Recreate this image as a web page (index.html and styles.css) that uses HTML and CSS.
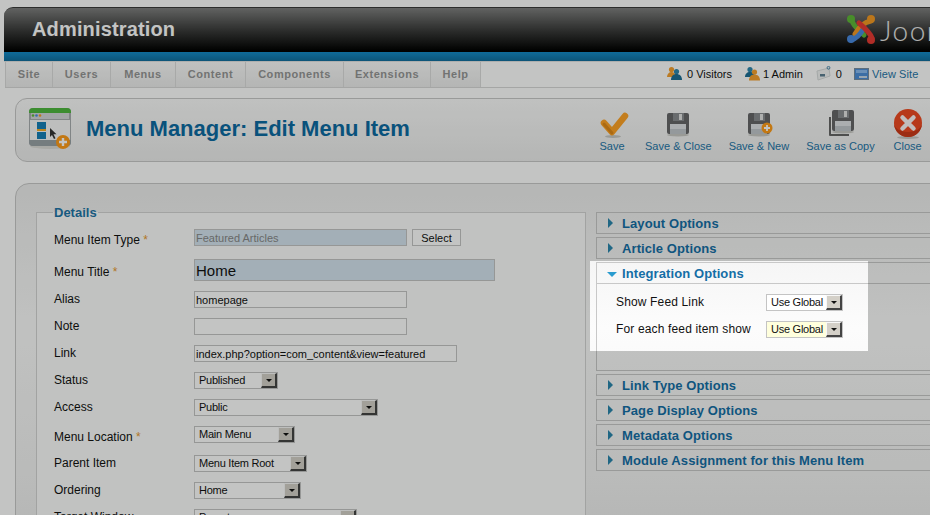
FILE: index.html
```html
<!DOCTYPE html>
<html lang="en">
<head>
<meta charset="utf-8">
<title>Menu Manager: Edit Menu Item</title>
<link rel="stylesheet" href="styles.css">
</head>
<body>
<div class="page">
  <header class="masthead">
    <h1 class="brand">Administration</h1>
    <div class="logo">
      <svg class="logo-mark" width="30" height="30" viewBox="0 0 30 30" fill="none" stroke-linecap="round">
        <path d="M6 7 C8 13 13 16 18 21" stroke="#5fb838" stroke-width="5"/>
        <circle cx="5" cy="5" r="4" fill="#5fb838"/>
        <path d="M25 7 C19 8 13 13 9 20" stroke="#f59a24" stroke-width="5"/>
        <circle cx="25" cy="5" r="4" fill="#f59a24"/>
        <path d="M5 26 C10 25 14 21 18 14" stroke="#4a8ae0" stroke-width="5"/>
        <circle cx="5" cy="25" r="4" fill="#4a8ae0"/>
        <path d="M26 24 C24 19 20 15 13 9" stroke="#e83a33" stroke-width="5"/>
        <circle cx="25" cy="26" r="4" fill="#e83a33"/>
      </svg>
      <span class="logo-text">Joomla!</span>
    </div>
  </header>
  <div class="band"></div>
  <nav class="menubar">
    <ul class="menu">
      <li class="menu-item m1">Site</li>
      <li class="menu-item m2">Users</li>
      <li class="menu-item m3">Menus</li>
      <li class="menu-item m4">Content</li>
      <li class="menu-item m5">Components</li>
      <li class="menu-item m6">Extensions</li>
      <li class="menu-item m7">Help</li>
    </ul>
    <div class="status">
      <svg class="st-icon" width="15" height="15" viewBox="0 0 15 15"><circle cx="4.5" cy="3.5" r="2.6" fill="#f5a030"/><path d="M0 11c0-3 2-5 4.5-5S9 8 9 11z" fill="#f5a030"/><circle cx="9.5" cy="5.5" r="2.6" fill="#2f86ad"/><path d="M4 14c0-4 2.500-6 5.500-6s5.500 2 5.500 6z" fill="#1d6f96"/></svg>
      <span class="st-text s1">0 Visitors</span>
      <svg class="st-icon" width="15" height="15" viewBox="0 0 15 15"><circle cx="5" cy="3.500" r="2.600" fill="#2f86ad"/><path d="M0 11c0-3 2-5 5-5s5 2 5 5z" fill="#1d6f96"/><circle cx="9.500" cy="6" r="2.600" fill="#f5a030"/><path d="M4 14.500c0-4 2.500-6 5.500-6s5.500 2 5.500 6z" fill="#f5a030"/></svg>
      <span class="st-text s2">1 Admin</span>
      <svg class="st-icon" width="15" height="15" viewBox="0 0 15 15"><path d="M1 5l12-3 1 8-12 4z" fill="#f2f4f4" stroke="#d8dcdc"/><path d="M4 8h5v2.500H4z" fill="#5e7f93"/><circle cx="12.500" cy="1.800" r="1.400" fill="none" stroke="#4b88ad"/></svg>
      <span class="st-text s3">0</span>
      <svg class="st-icon" width="15" height="12" viewBox="0 0 15 12"><rect x=".5" y=".5" width="14" height="11" fill="#4f8fd8" stroke="#7a8fa3"/><rect x="2" y="2" width="11" height="3" fill="#8cbcf0"/><rect x="5" y="8" width="8" height="2" fill="#c8d8e8"/></svg>
      <a class="st-link">View Site</a>
    </div>
  </nav>

  <section class="titlebox">
    <div class="titlepart">
      <svg class="title-icon" width="44" height="44" viewBox="0 0 44 44">
        <ellipse cx="21" cy="39" rx="20" ry="3" fill="#dcdcd8"/>
        <rect x="0" y="1" width="42" height="38" rx="4" fill="#a9adb0"/>
        <path d="M0 6V5a4 4 0 0 1 4-4h34a4 4 0 0 1 4 4v1z" fill="#4fb83f"/>
        <rect x="2" y="6" width="38" height="6" fill="#d4d7d9"/>
        <circle cx="4" cy="8.500" r="1.300" fill="#5fb838"/><circle cx="7.500" cy="8.500" r="1.300" fill="#4a8ae0"/><circle cx="11" cy="8.500" r="1.300" fill="#f59a24"/>
        <rect x="1" y="13" width="40" height="20" fill="#f8f8f8"/>
        <rect x="8" y="15" width="9" height="7" fill="#177fb8"/>
        <rect x="8" y="22" width="9" height="2" fill="#f5ac27"/>
        <rect x="8" y="25" width="9" height="7" fill="#177fb8"/>
        <path d="M21 21l0 9 2-2 2 4 1.500-.7-2-4h3z" fill="#333"/>
        <path d="M0 33h42v2a4 4 0 0 1-4 4H4a4 4 0 0 1-4-4z" fill="#9aa2a7"/>
        <circle cx="34" cy="35" r="7" fill="#ff9c1a"/>
        <path d="M34 31v8M30 35h8" stroke="#fff" stroke-width="2.400"/>
      </svg>
      <h2 class="page-title">Menu Manager: Edit Menu Item</h2>
    </div>
    <div class="toolbar">
      <div class="tool">
        <svg class="tool-icon" width="32" height="32" viewBox="0 0 32 32"><ellipse cx="17" cy="28.500" rx="8" ry="1.500" fill="#c8c8c4"/><path d="M8 15l8 9L29 8" fill="none" stroke="#ffa327" stroke-width="6.500" stroke-linecap="round" stroke-linejoin="round"/><path d="M8 16l8 9" fill="none" stroke="#e08a1a" stroke-width="3" stroke-linecap="round"/></svg>
        <span class="tool-label">Save</span>
      </div>
      <div class="tool">
        <svg class="tool-icon" width="32" height="32" viewBox="0 0 32 32"><use href="#disk"/></svg>
        <span class="tool-label">Save &amp; Close</span>
      </div>
      <div class="tool">
        <svg class="tool-icon" width="32" height="32" viewBox="0 0 32 32"><use href="#disk"/><circle cx="24" cy="20" r="5.500" fill="#ff9c1a"/><path d="M24 17v6M21 20h6" stroke="#fff" stroke-width="1.800"/></svg>
        <span class="tool-label">Save &amp; New</span>
      </div>
      <div class="tool">
        <svg class="tool-icon" width="32" height="32" viewBox="0 0 32 32"><path d="M5 9h2v17h18v2H6a1 1 0 0 1-1-1z" fill="#666"/><use href="#disk" x="3" y="-3"/></svg>
        <span class="tool-label">Save as Copy</span>
      </div>
      <div class="tool">
        <svg class="tool-icon" width="32" height="32" viewBox="0 0 32 32"><ellipse cx="16" cy="29.500" rx="11" ry="1.500" fill="#c8c8c4"/><circle cx="16" cy="15" r="14" fill="#f04a22"/><path d="M16 29a14 14 0 0 0 14-14c0 5-6 9-14 9S2 20 2 15a14 14 0 0 0 14 14z" fill="#cc3a1a"/><path d="M10.500 9.500l11 11M21.500 9.500l-11 11" stroke="#fbf6f6" stroke-width="4.500" stroke-linecap="round"/></svg>
        <span class="tool-label">Close</span>
      </div>
    </div>
  </section>

  <svg class="defs" width="0" height="0"><defs><g id="disk"><ellipse cx="16" cy="27" rx="11" ry="1.500" fill="#c8c8c4"/><path d="M7 5h18a2 2 0 0 1 2 2v17a2 2 0 0 1-2 2H7a2 2 0 0 1-2-2V7a2 2 0 0 1 2-2z" fill="#666669"/><rect x="11" y="5" width="11" height="8" fill="#8a8d90"/><rect x="17" y="6" width="3" height="6" fill="#e4e4e4"/><rect x="8" y="16" width="16" height="10" fill="#e0e3e6"/><rect x="8" y="21" width="16" height="5" fill="#c2c7cc"/></g></defs></svg>

  <main class="mainbox">
    <fieldset class="details">
      <legend class="legend">Details</legend>
      <div class="row row-type">
        <label class="lbl req">Menu Item Type <span class="star">*</span></label>
        <input class="field f-type" value="Featured Articles" readonly>
        <button class="select-btn">Select</button>
      </div>
      <div class="row row-title">
        <label class="lbl req req-title">Menu Title <span class="star">*</span></label>
        <input class="field f-title" value="Home">
      </div>
      <div class="row"><label class="lbl">Alias</label><input class="field f-std" value="homepage"></div>
      <div class="row"><label class="lbl">Note</label><input class="field f-std"></div>
      <div class="row"><label class="lbl">Link</label><input class="field f-link" value="index.php?option=com_content&amp;view=featured"></div>
      <div class="row"><label class="lbl">Status</label><div class="dropdown d-status"><span class="dd-text">Published</span><span class="dd-arrow"></span></div></div>
      <div class="row"><label class="lbl">Access</label><div class="dropdown d-access"><span class="dd-text">Public</span><span class="dd-arrow"></span></div></div>
      <div class="row row-loc"><label class="lbl req">Menu Location <span class="star">*</span></label><div class="dropdown d-loc"><span class="dd-text">Main Menu</span><span class="dd-arrow"></span></div></div>
      <div class="row"><label class="lbl">Parent Item</label><div class="dropdown d-parent"><span class="dd-text">Menu Item Root</span><span class="dd-arrow"></span></div></div>
      <div class="row"><label class="lbl">Ordering</label><div class="dropdown d-order"><span class="dd-text">Home</span><span class="dd-arrow"></span></div></div>
      <div class="row"><label class="lbl">Target Window</label><div class="dropdown d-target"><span class="dd-text">Parent</span><span class="dd-arrow"></span></div></div>
    </fieldset>

    <aside class="accordion">
      <div class="panel"><h3 class="panel-head"><span class="tri"></span>Layout Options</h3></div>
      <div class="panel"><h3 class="panel-head"><span class="tri"></span>Article Options</h3></div>
      <div class="panel panel-open">
        <h3 class="panel-head head-open"><span class="tri tri-down"></span>Integration Options</h3>
        <div class="panel-body">
          <div class="opt"><label class="opt-lbl">Show Feed Link</label><div class="dropdown d-opt"><span class="dd-text">Use Global</span><span class="dd-arrow"></span></div></div>
          <div class="opt"><label class="opt-lbl">For each feed item show</label><div class="dropdown d-opt d-yellow"><span class="dd-text">Use Global</span><span class="dd-arrow"></span></div></div>
        </div>
      </div>
      <div class="panel"><h3 class="panel-head"><span class="tri"></span>Link Type Options</h3></div>
      <div class="panel"><h3 class="panel-head"><span class="tri"></span>Page Display Options</h3></div>
      <div class="panel"><h3 class="panel-head"><span class="tri"></span>Metadata Options</h3></div>
      <div class="panel"><h3 class="panel-head"><span class="tri"></span>Module Assignment for this Menu Item</h3></div>
    </aside>
  </main>
</div>
<div class="spotlight"></div>
</body>
</html>
```
FILE: styles.css
```css
html, body {
  margin: 0;
  height: 515px;
  overflow: hidden;
  background: #fff;
  font-family: "Liberation Sans", Arial, sans-serif;
}
.page {
  width: 1040px;
  padding: 7px 0 0 4px;
  box-sizing: border-box;
  border: 0;
}
.masthead {
  height: 44px;
  display: flex;
  justify-content: space-between;
  border-top: 1px solid #3a3a3a;
  border-radius: 9px 0 0 0;
  background: linear-gradient(#808080, #3c3c3c 50%, #000 98%);
  box-sizing: content-box;
}
.brand {
  margin: 0;
  padding: 9px 0 0 28px;
  font-size: 20px;
  line-height: 24px;
  font-weight: bold;
  letter-spacing: .15px;
  color: #fff;
}
.logo {
  display: flex;
  align-items: flex-start;
  margin-right: 79px;
  width: 115px;
  padding-top: 6px;
  gap: 4px;
}
.logo-mark { flex: none; }
.logo-text {
  font-family: Lato, sans-serif;
  font-weight: 300;
  font-size: 28px;
  line-height: 32px;
  letter-spacing: 1.5px;
  color: #e8e8e8;
}
.band {
  height: 9px;
  background: linear-gradient(#148bc9, #116e9d);
  border-bottom: 1px solid #e4e4e4;
}
.menubar {
  display: flex;
  height: 25px;
  border-bottom: 1px solid #d8d8d8;
  margin-left: 1px;
  border-left: 0;
  position: relative;
}
.menu {
  display: flex;
  margin: 0;
  padding: 0;
  list-style: none;
}
.menu-item {
  box-sizing: border-box;
  border-left: 1px solid #dcdcdc;
  background: linear-gradient(#fbfbfb, #ececec);
  font-size: 11px;
  font-weight: bold;
  line-height: 25px;
  letter-spacing: .55px;
  color: #969696;
  text-align: center;
}
.m1 { width: 47px; }
.m2 { width: 58px; }
.m3 { width: 65px; }
.m4 { width: 70px; }
.m5 { width: 98px; }
.m6 { width: 87px; }
.m7 { width: 51px; border-right: 1px solid #dcdcdc; }
.status {
  display: flex;
  align-items: center;
  margin-left: 186px;
  padding-bottom: 2px;
  font-size: 11px;
  color: #111;
}
.st-text { white-space: nowrap; }
.s1 { margin: 0 13px 0 5px; }
.s2 { margin: 0 13px 0 3px; }
.s3 { margin: 0 12px 0 5px; }
.st-link { margin-left: 3px; letter-spacing: .1px; color: #1f75a8; white-space: nowrap; }

.titlebox {
  display: flex;
  margin: 10px 0 0 11px;
  height: 64px;
  box-sizing: border-box;
  border: 1px solid #c8c8c8;
  border-radius: 12px 0 0 12px;
  background: linear-gradient(#fbfbfb, #ededed);
}
.titlepart {
  display: flex;
  align-items: center;
  width: 580px;
  padding: 0 0 2px 13px;
  box-sizing: border-box;
  flex: none;
}
.title-icon { flex: none; margin-right: 13px; }
.page-title {
  margin: 0;
  font-size: 22px;
  font-weight: bold;
  color: #0c6aa2;
}
.toolbar {
  display: flex;
  gap: 17px;
  padding-top: 9px;
}
.tool {
  display: flex;
  flex-direction: column;
  align-items: center;
}
.tool-icon { display: block; margin-bottom: -1px; overflow: visible; }
.tool-label {
  font-size: 11px;
  line-height: 14px;
  color: #1f75a8;
  white-space: nowrap;
}
.defs { position: absolute; }

.mainbox {
  display: flex;
  margin: 21px 0 0 11px;
  height: 400px;
  padding: 21px 0 0 20px;
  box-sizing: border-box;
  border: 1px solid #c8c8c8;
  border-radius: 14px 0 0 0;
  background: linear-gradient(#eeeeee, #fcfcfc 36%, #f4f4f4 70%, #eaeaea);
}
.details {
  width: 550px;
  box-sizing: border-box;
  margin: 0;
  padding: 0 0 0 17px;
  height: 400px;
  border: 1px solid #d4d4d4;
  background: #fdfdfd;
  flex: none;
}
.legend {
  padding: 0 1px;
  margin-left: -1px;
  font-size: 13px;
  line-height: 15px;
  font-weight: bold;
  color: #1f75a8;
}
.row {
  display: flex;
  height: 17px;
  margin-bottom: 10px;
  align-items: flex-start;
  position: relative;
}
.row-type { margin-top: 9px; margin-bottom: 13px; }
.row-title { height: 22px; }
.row-loc { margin-bottom: 12px; }
.lbl {
  width: 140px;
  flex: none;
  padding-top: 1px;
  font-size: 12px;
  line-height: 15px;
  color: #111;
}
.req { padding-top: 4px; }
.req-title { padding-top: 6px; }
.star { color: #e89a30; }
.field {
  box-sizing: border-box;
  margin: 0;
  padding: 0 1px;
  border: 1px solid #c4c4c4;
  height: 17px;
  background: #fff;
  font-family: "Liberation Sans", Arial, sans-serif;
  font-size: 11px;
  color: #111;
  border-radius: 0;
  outline: 0;
}
.f-type { width: 213px; background: #d5e4f0; color: #888; }
.f-title { width: 301px; height: 22px; background: #d5e4f0; font-size: 15px; }
.f-std { width: 213px; }
.f-link { width: 263px; }
.select-btn {
  box-sizing: border-box;
  margin-left: 5px;
  width: 49px;
  height: 17px;
  padding: 0;
  border: 1px solid #c4c4c4;
  background: #fff;
  border-radius: 0;
  font-family: "Liberation Sans", Arial, sans-serif;
  font-size: 11px;
  color: #111;
}
.dropdown {
  box-sizing: border-box;
  display: flex;
  justify-content: space-between;
  align-items: stretch;
  height: 17px;
  border: 1px solid #c4c4c4;
  background: #fff;
  font-size: 11px;
  line-height: 15px;
  color: #111;
}
.dd-text { padding-left: 4px; white-space: nowrap; letter-spacing: -.25px; }
.dd-arrow {
  box-sizing: border-box;
  width: 16px;
  position: relative;
  background: #d4d0c8;
  border-style: solid;
  border-width: 1px 2px 2px 1px;
  border-color: #f8f8f8 #444 #444 #f8f8f8;
}
.dd-arrow::after {
  content: "";
  position: absolute;
  left: 4px;
  top: 5px;
  border-style: solid;
  border-width: 3px 3px 0 3px;
  border-color: #111 transparent transparent transparent;
}
.d-status { width: 84px; }
.d-access { width: 184px; }
.d-loc { width: 101px; }
.d-parent { width: 113px; }
.d-order { width: 107px; }
.d-target { width: 163px; }

.accordion {
  width: 420px;
  margin: 7px 0 0 10px;
  flex: none;
  display: flex;
  flex-direction: column;
  gap: 3px;
}
.panel {
  box-sizing: border-box;
  border: 1px solid #c8c8c8;
  height: 22px;
}
.panel-open { height: 109px; }
.panel-head {
  display: flex;
  align-items: center;
  height: 20px;
  margin: 0;
  font-size: 13px;
  font-weight: bold;
  letter-spacing: .1px;
  color: #146ea6;
}
.head-open { border-bottom: 1px solid #c8c8c8; }
.tri {
  margin: 0 9px 0 11px;
  width: 0;
  height: 0;
  border-style: solid;
  border-width: 5px 0 5px 5px;
  border-color: transparent transparent transparent #2a86ad;
}
.tri-down {
  margin: 2px 5px 0 10px;
  border-width: 5px 5px 0 5px;
  border-color: #2a9ccf transparent transparent transparent;
}
.panel-body { padding: 10px 0 0 19px; }
.opt {
  display: flex;
  height: 17px;
  margin-bottom: 10px;
}
.opt-lbl {
  width: 150px;
  padding-top: 1px;
  font-size: 12px;
  line-height: 15px;
  letter-spacing: .15px;
  color: #111;
}
.d-opt { width: 77px; background: #fff; }
.d-yellow { background: #ffffdd; }

.spotlight {
  position: absolute;
  left: 590px;
  top: 261px;
  width: 278px;
  height: 90px;
  box-shadow: 0 0 0 2000px rgba(0, 6, 0, .235);
}
```
